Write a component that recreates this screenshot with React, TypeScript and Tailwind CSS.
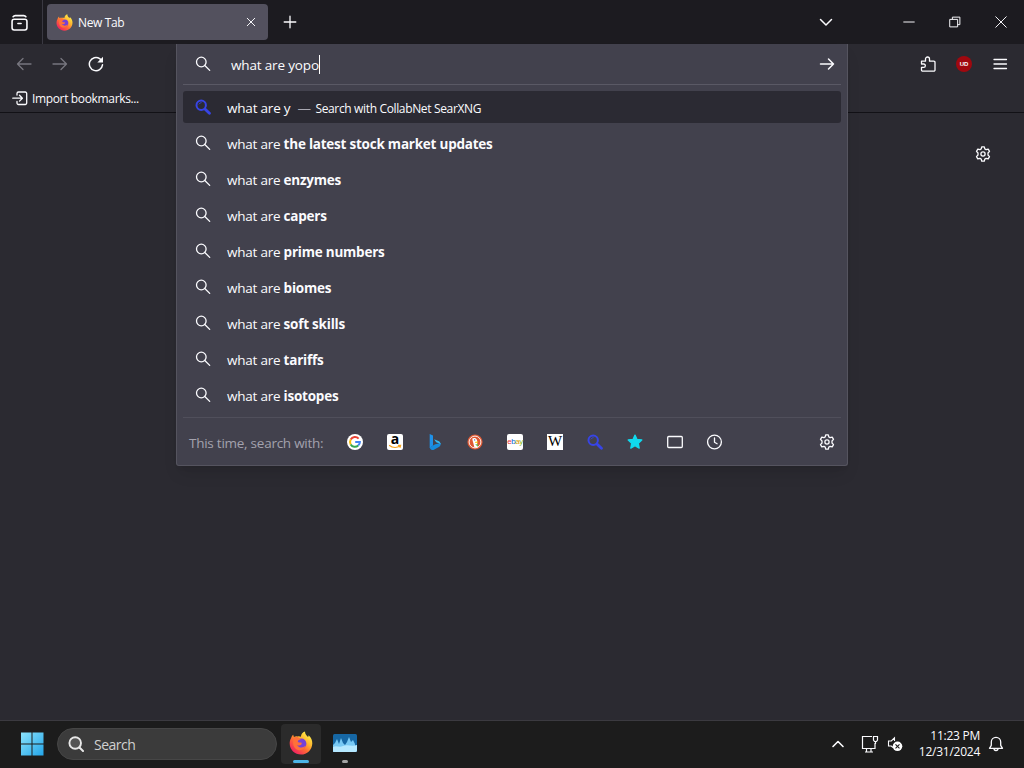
import type { ReactNode } from 'react';

const suggestions = [
  'the latest stock market updates',
  'enzymes',
  'capers',
  'prime numbers',
  'biomes',
  'soft skills',
  'tariffs',
  'isotopes',
];

interface IconProps {
  className?: string;
  children?: ReactNode;
}

function Icon({ className = 'size-4', children }: IconProps) {
  return (
    <svg viewBox="0 0 16 16" fill="none" stroke="currentColor" strokeWidth="1.3" strokeLinecap="round" strokeLinejoin="round" className={`shrink-0 ${className}`}>
      {children}
    </svg>
  );
}

function SearchIcon({ className }: IconProps) {
  return (
    <Icon className={className}>
      <circle cx="6.3" cy="6" r="4.8" />
      <path d="M9.8 9.5l4.9 4.9" />
    </Icon>
  );
}

function SearxIcon({ className }: IconProps) {
  return (
    <Icon className={className}>
      <circle cx="6.2" cy="6.2" r="4.7" strokeWidth="2" />
      <path d="M4 5a2.6 2.6 0 0 1 2.2-1.4" strokeWidth="0.8" />
      <path d="M10.2 10.2l4.2 4" strokeWidth="2.9" />
    </Icon>
  );
}

function GearIcon() {
  return (
    <Icon>
      <path d="M6.7 .8h2.6l.5 2.1 1.3.8 2.1-.6 1.3 2.300-1.500 1.600v2l1.500 1.600-1.300 2.300-2.100-.6-1.300.8-.5 2.100H6.700l-.5-2.100-1.300-.8-2.100.6-1.300-2.300L3 9V7L1.500 5.400l1.300-2.300 2.100.6 1.300-.8z" />
      <circle cx="8" cy="8" r="2.100" />
    </Icon>
  );
}

function FirefoxIcon({ className }: IconProps) {
  return (
    <svg viewBox="0 0 24 24" className={`shrink-0 ${className}`}>
      <defs>
        <linearGradient id="ff-body" x1="0.85" y1="0.1" x2="0.2" y2="0.9">
          <stop offset="0" stopColor="#fff04a" />
          <stop offset="0.35" stopColor="#ffb42e" />
          <stop offset="0.62" stopColor="#ff6b35" />
          <stop offset="1" stopColor="#f0255f" />
        </linearGradient>
      </defs>
      <path d="M2.1 7c.5-1.5 1.2-2.7 2.2-3.3 0 1 .3 1.7.7 2.2 1-.7 2.4-.8 3.7-.5 1.2-.3 2.2-.2 3.2.4C12 3.3 13.4 1.2 16 .4c0 2.5 1.3 3.9 3 5.5.5-.4.6-1 .5-1.6C22.2 6.5 23.4 9.5 23.3 12.5 23 19 18.200 23.600 12 23.600S.8 18.900.7 12.800C.6 10.700 1.100 8.800 2.100 7z" fill="url(#ff-body)" />
      <circle cx="12.300" cy="12.700" r="5.100" fill="#7542d7" />
      <path d="M5 6.500c2.600-1.200 5.200-.4 6.700 1.900-1.900.2-2.900 1-2.900 1.900 0 1 1.100 1.400 2.500 1.300 1 0 1.700.5 1.400 1.200-.5 1.500-2.300 2.200-4.700 1.100 1.700 3 6 3.500 8.700.7-1 3.600-4.400 5.200-7.700 4.300C5.500 17.900 3.700 14 4.200 10.500z" fill="#ff7139" />
    </svg>
  );
}

function GoogleIcon() {
  return (
    <svg viewBox="0 0 16 16" className="size-4">
      <circle cx="8" cy="8" r="8" fill="#fff" />
      <g fill="none" strokeWidth="2">
        <path d="M11.600 4.600A4.900 4.900 0 0 0 3.700 5.600" stroke="#ea4335" />
        <path d="M3.700 5.600a4.900 4.900 0 0 0 0 4.800" stroke="#fbbc05" />
        <path d="M3.700 10.400a4.900 4.900 0 0 0 7.500 1.200" stroke="#34a853" />
        <path d="M11.200 11.600A4.900 4.900 0 0 0 12.900 8H8.200" stroke="#4285f4" />
      </g>
    </svg>
  );
}

function AmazonIcon() {
  return (
    <span className="relative size-4 rounded-[2px] bg-white text-center font-['Open_Sans',sans-serif] text-[14px] leading-[10px] font-bold text-black">
      a
      <svg viewBox="0 0 16 16" className="absolute inset-0 size-4" fill="none" stroke="#f6a21d" strokeWidth="1.200" strokeLinecap="round">
        <path d="M2.500 11.500c3 2.400 7.500 2.500 10.600.6M11.400 11.300l2.200.1-.5 2" />
      </svg>
    </span>
  );
}

function BingIcon() {
  return (
    <svg viewBox="0 0 16 16" className="size-4">
      <path d="M2.700 0L6 1.400v10L2.700 14z" fill="#1f91e8" />
      <path d="M2.700 13.500L6 11.500l2.300-1.300 5.300-1.100c.2 2-.5 3.200-1.800 4L6.500 16c-1.600.4-3-.5-3.800-2.500z" fill="#168bdd" />
      <path d="M7.100 5.300l4.300 1.600c1.500.7 2.300 1.800 2.200 3.600-.5-.7-1-1-1.800-1.300l-2.600-.9z" fill="#35b9f2" />
    </svg>
  );
}

function DuckIcon() {
  return (
    <svg viewBox="0 0 16 16" className="size-4">
      <circle cx="8" cy="8" r="7.600" fill="#de5833" />
      <circle cx="8" cy="8" r="5.900" fill="#de5833" stroke="#fff" strokeWidth=".9" />
      <path d="M5.300 4.400c1.600-1 4-.6 4.700 1.500.4 1.400 0 2.400.2 3.700l.8 3.300c-1 .5-2.300.8-3.600.5L6.300 9c-.5-1.800-.8-3-1-4.600z" fill="#fff" />
      <path d="M8.300 7.800l3-.4-.8 1.300-2.400.3z" fill="#fdd20a" />
      <path d="M8.200 10.500l2.800-.6v2.900z" fill="#65bc46" />
      <circle cx="7.700" cy="5.900" r=".6" fill="#2d4f8e" />
    </svg>
  );
}

function EbayIcon() {
  return (
    <span className="flex size-4 items-center justify-center rounded-[2px] bg-white font-['Liberation_Sans',sans-serif] text-[8px] leading-none tracking-[-0.5px]">
      <span className="text-[#e53238]">e</span>
      <span className="text-[#0064d2]">b</span>
      <span className="text-[#d99b00]">a</span>
      <span className="text-[#86b817]">y</span>
    </span>
  );
}

function WikipediaIcon() {
  return (
    <span className="flex size-4 items-center justify-center bg-white font-['Liberation_Serif',serif] text-[15px] leading-none text-black">W</span>
  );
}

function ClockIcon() {
  return (
    <Icon>
      <circle cx="7.500" cy="8" r="6.900" />
      <path d="M7.500 4v4.200l2.600 1.500" />
    </Icon>
  );
}

function TitleBar() {
  return (
    <header className="flex h-11 items-center bg-[#1c1b20]">
      <div className="flex h-full w-[43px] items-center justify-center border-r border-[#3a3942] pr-[3px]">
        <Icon className="size-[17px]">
          <rect x="1" y="5" width="14" height="10" rx="2" strokeWidth="1.500" />
          <path d="M2 2.600A2.500 2.500 0 0 1 4 1.500h8a2.500 2.500 0 0 1 2 1.100M6.500 9h3" strokeWidth="1.500" />
        </Icon>
      </div>
      <div className="ml-1 flex h-9 w-[221px] items-center rounded bg-[#53515e] pr-[11px] pl-[9px]">
        <FirefoxIcon className="size-[17px]" />
        <span className="ml-[5px] flex-1 pt-0.5 text-[12px] tracking-[-0.35px]">New Tab</span>
        <Icon className="size-3">
          <path d="M3 3l10 10M13 3L3 13" />
        </Icon>
      </div>
      <Icon className="ml-[14px] size-4">
        <path d="M8 2.200v11.600M2.200 8h11.600" />
      </Icon>
      <div className="ml-auto flex items-center">
        <Icon className="mr-[69px] size-4">
          <path d="M2.500 5.500L8 11l5.500-5.500" strokeWidth="1.500" />
        </Icon>
        <Icon className="mr-[34px] size-3">
          <path d="M1 8h14" />
        </Icon>
        <Icon className="mr-[34px] size-3">
          <path d="M1.500 4.500h10v10h-10zM4.500 4V1.500h10v10H12" strokeLinejoin="miter" />
        </Icon>
        <Icon className="mr-[17px] size-3">
          <path d="M1 1l14 14M15 1L1 15" />
        </Icon>
      </div>
    </header>
  );
}

function Toolbar() {
  return (
    <div className="h-[69px] border-b border-[#121116]">
      <div className="flex h-10 items-center px-4">
        <Icon className="mr-5 size-4 text-[#77767f]">
          <path d="M15 8H1.500M7 2.500L1.500 8 7 13.500" />
        </Icon>
        <Icon className="mr-5 size-4 text-[#77767f]">
          <path d="M1 8h13.500M9 2.500L14.500 8 9 13.500" />
        </Icon>
        <Icon>
          <path d="M14.500 8.800A6.600 6.600 0 1 1 11.700 2.600l1.500 1.400" strokeWidth="1.500" />
          <path d="M15 .8v5.700H9.300z" fill="currentColor" stroke="none" />
        </Icon>
        <Icon className="ml-auto size-4">
          <path d="M1.500 8V5.200h4V3a2 2 0 0 1 4 0v2.200h4.300A1.200 1.200 0 0 1 15 6.400V14a1.200 1.200 0 0 1-1.200 1.200H2.700A1.200 1.200 0 0 1 1.500 14v-2.700h2.200a1.650 1.650 0 0 0 0-3.300z" />
        </Icon>
        <span className="mx-5 flex size-4 items-center justify-center rounded-full bg-[#a0080f] font-['Liberation_Sans',sans-serif] text-[6px] leading-none font-bold">UD</span>
        <Icon>
          <path d="M2 3.500h12.500M2 8h12.500M2 12.500h12.500" />
        </Icon>
      </div>
      <div className="flex h-7 items-center pl-3">
        <Icon>
          <path d="M5 5V3.500A1.500 1.500 0 0 1 6.500 2h6.700a1.500 1.500 0 0 1 1.500 1.500V13a1.500 1.500 0 0 1-1.500 1.500H6.500A1.500 1.500 0 0 1 5 13v-1.500M.8 8.200h9.500M7.500 5.300l2.900 2.900-2.900 2.900" />
        </Icon>
        <span className="ml-1 pt-0.5 text-[12px] tracking-[-0.35px]">Import bookmarks...</span>
      </div>
    </div>
  );
}

function UrlBarPopup() {
  return (
    <section className="absolute top-11 left-44 flex h-[422px] w-[672px] flex-col rounded-b-[3px] border border-t-0 border-[#55545f] bg-[#42414d] shadow-lg">
      <div className="mx-1.5 flex h-[41px] items-center border-b border-[#5a5965] pr-1.5 pl-3">
        <SearchIcon className="size-4" />
        <div className="ml-5 flex items-center">
          <span className="pt-0.5 text-[13.500px] tracking-[-0.16px]">what are yopo</span>
          <span className="h-[19px] w-px bg-white" />
        </div>
        <Icon className="ml-auto size-4">
          <path d="M1.500 8h13M9.500 3l5 5-5 5" strokeWidth="1.500" />
        </Icon>
      </div>
      <ul className="mx-1.5 flex-1 pt-1">
        <li className="my-0.5 flex h-8 items-center rounded-[3px] bg-[#2b2a33] pl-3">
          <SearxIcon className="size-4 text-[#3744e5]" />
          <span className="ml-4 pt-0.5 text-[13.500px] tracking-[-0.2px]">what are y</span>
          <span className="ml-[7px] w-[18px] pt-[3px] text-[13.500px] text-[#a9a8b2]">—</span>
          <span className="pt-[3px] text-[12px] tracking-[-0.35px]">Search with CollabNet SearXNG</span>
        </li>
        {suggestions.map((suggestion) => (
          <li key={suggestion} className="flex h-9 items-center pl-3">
            <SearchIcon className="size-4" />
            <span className="ml-4 pt-0.5 text-[13.500px] tracking-[-0.23px] whitespace-pre">what are <b>{suggestion}</b></span>
          </li>
        ))}
      </ul>
      <div className="mx-1.5 flex h-12 items-center border-t border-[#504f5b] px-1.5">
        <span className="w-[158px] pt-[3px] text-[13.500px] tracking-[-0.25px] text-[#a3a2ad]">This time, search with:</span>
        <div className="flex items-center gap-6">
          <GoogleIcon />
          <AmazonIcon />
          <BingIcon />
          <DuckIcon />
          <EbayIcon />
          <WikipediaIcon />
          <SearxIcon className="size-4 text-[#3744e5]" />
          <Icon className="size-4 text-[#10d9ee]">
            <path d="M8 1.100l2 4.300 4.800.6-3.500 3.300.9 4.800L8 11.800l-4.200 2.300.9-4.800L1.200 6 6 5.400z" fill="currentColor" />
          </Icon>
          <Icon>
            <rect x=".7" y="2.500" width="14.600" height="11" rx="1" />
          </Icon>
          <ClockIcon />
        </div>
        <div className="ml-auto">
          <GearIcon />
        </div>
      </div>
    </section>
  );
}

function Taskbar() {
  return (
    <footer className="flex h-12 items-center border-t border-[#3b3a40] bg-[#1c1c1c] pb-px">
      <svg viewBox="0 0 24 24" className="ml-5 size-6">
        <defs>
          <linearGradient id="win" x1="0" y1="0" x2="1" y2="1">
            <stop offset="0" stopColor="#8be2fb" />
            <stop offset="1" stopColor="#23a5e9" />
          </linearGradient>
        </defs>
        <path d="M1 .5h10.500V11.500H1zM12.500 .5H23.500V11.500H12.500zM1 12.500h10.500V23.500H1zM12.500 12.500H23.500V23.500H12.500z" fill="url(#win)" />
      </svg>
      <div className="ml-[13px] flex h-8 w-[220px] items-center rounded-full border border-[#464646] bg-[#3b3b3b] pl-[10px]">
        <Icon className="size-4 text-[#e8e8e8]">
          <circle cx="7.200" cy="7" r="5.800" strokeWidth="1.900" fill="#555" />
          <path d="M11.500 11.500l3.500 3.500" strokeWidth="2" />
        </Icon>
        <span className="ml-[10px] text-[14px] tracking-[-0.5px] text-[#d0d0d0]">Search</span>
      </div>
      <div className="ml-1 flex h-10 w-10 flex-col items-center rounded bg-[#2b2b2b] pt-[7px]">
        <FirefoxIcon className="size-6" />
        <span className="mt-[5px] h-[3px] w-4 rounded-full bg-[#4cb4e7]" />
      </div>
      <div className="ml-1 flex h-10 w-10 flex-col items-center pt-[10px]">
        <svg viewBox="0 0 24 18" className="h-[18px] w-6">
          <rect width="24" height="18" rx="1.500" fill="#1667a4" />
          <path d="M0 11l2-2 2-4 2 5 2-6 2 5 2 2 2-3 2-5 2 5 2-2 2 4v8H0z" fill="#78c9f4" />
          <path d="M0 13c4-2 6 1 10-1 5-2 8 1 14-1v5.500a1.500 1.500 0 0 1-1.500 1.500h-21A1.500 1.500 0 0 1 0 16.500z" fill="#b5e8ff" />
        </svg>
        <span className="mt-[8px] h-[3px] w-1.5 rounded-full bg-[#a4a4a4]" />
      </div>
      <div className="ml-auto flex items-center pr-5">
        <Icon className="size-4">
          <path d="M3 10.500l5-5 5 5" strokeWidth="1.600" />
        </Icon>
        <svg viewBox="0 0 18 18" fill="none" stroke="currentColor" strokeWidth="1.200" className="ml-[15px] size-[18px]">
          <path d="M11 1.500H1.500v12H14V8M5.500 13.500V17M10 13.500V17M4 17h8M12.500 1.500h4v3.500l-1 1.500h-2l-1-1.500zM14.500 6.500V9" />
        </svg>
        <svg viewBox="0 0 16 16" fill="none" stroke="currentColor" strokeWidth="1.100" className="ml-[8px] size-4">
          <path d="M7.500 5V1.800L4.300 5H1.500v5h2.800L6 11.500" />
          <circle cx="10.500" cy="10.300" r="4.800" fill="#fff" stroke="none" />
          <path d="M8.500 8.300l4 4M12.500 8.300l-4 4" stroke="#1c1c1c" />
        </svg>
        <div className="ml-[14px] w-[63px] text-right text-[12px] leading-4 tracking-[-0.25px] whitespace-nowrap">
          <div>11:23 PM</div>
          <div>12/31/2024</div>
        </div>
        <Icon className="ml-[8px] size-4">
          <path d="M1.500 12.300h13l-1.800-3V6a4.700 4.700 0 0 0-9.400 0v3.300zM6 12.500a2 2 0 0 0 4 0" />
        </Icon>
      </div>
    </footer>
  );
}

export default function App() {
  return (
    <div className="relative flex h-screen w-screen flex-col overflow-hidden bg-[#2b2a31] font-['Open_Sans','Noto_Sans',sans-serif] text-[#fbfbfe]">
      <TitleBar />
      <Toolbar />
      <main className="flex flex-1 items-start justify-end pt-[33px] pr-[33px]">
        <GearIcon />
      </main>
      <UrlBarPopup />
      <Taskbar />
    </div>
  );
}
